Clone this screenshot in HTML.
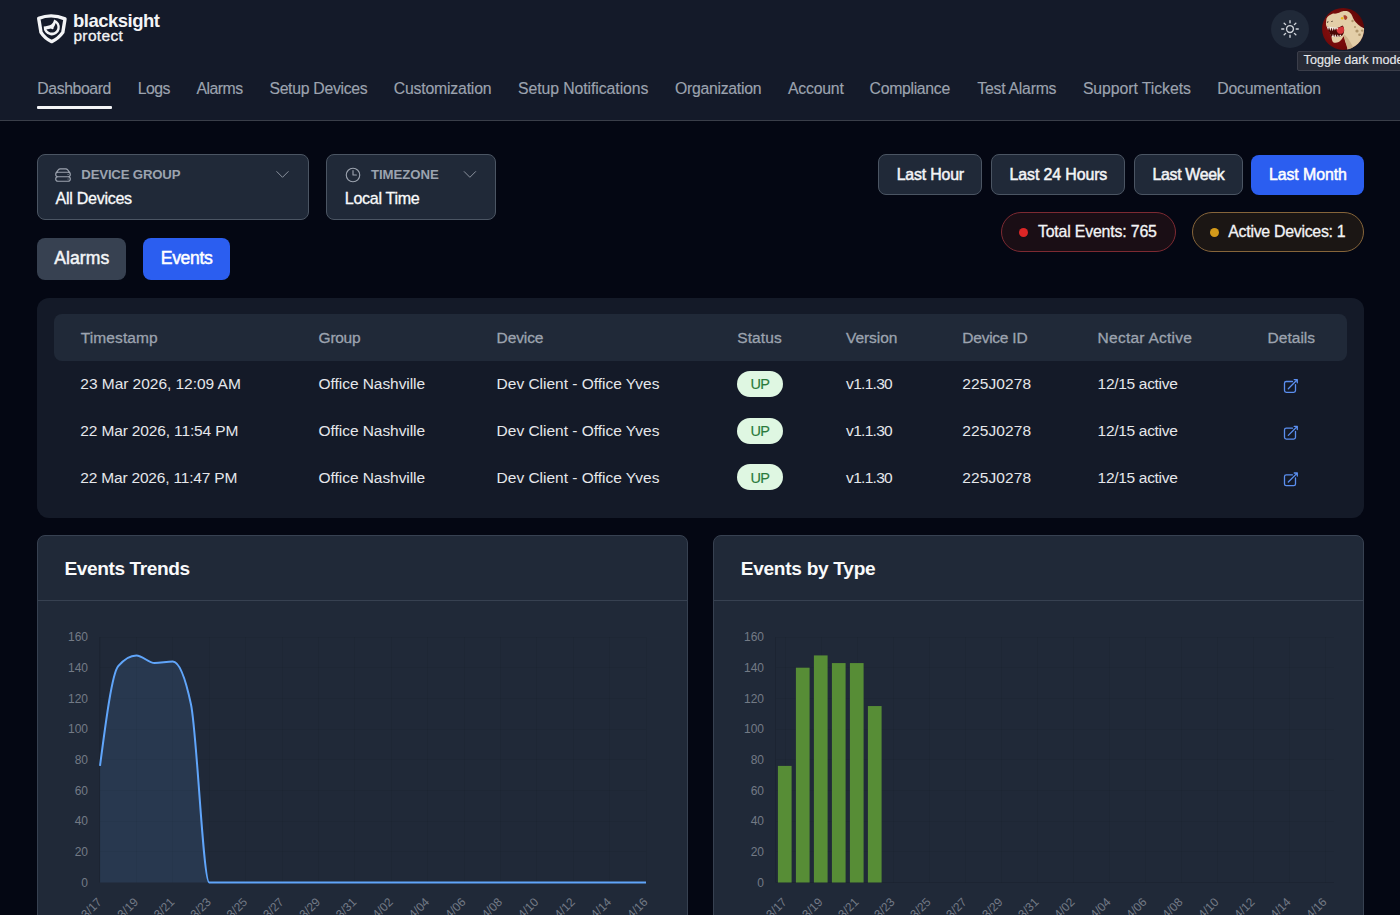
<!DOCTYPE html>
<html><head><meta charset="utf-8"><style>
*{margin:0;padding:0;box-sizing:border-box}
html,body{width:1400px;height:915px;overflow:hidden;background:#040713;font-family:"Liberation Sans",sans-serif}
.a{position:absolute}
.t{position:absolute;white-space:nowrap}
.ax{position:absolute;width:60px;text-align:right;font-size:12px;line-height:12px;color:#737a86}
svg{position:absolute;left:0;top:0;overflow:visible}
</style></head><body>
<!-- header -->
<div class="a" style="left:0;top:0;width:1400px;height:120.5px;background:#141a29;border-bottom:1.5px solid #3a3e49"></div>
<svg width="80" height="50" viewBox="0 0 80 50" style="left:0;top:0">
  <path d="M38.7,18.4 Q51.5,13.2 65,18.9 L62.8,32.4 Q58.5,38.6 51.7,41.6 Q44.9,38.6 41,32.4 Z" fill="none" stroke="#f3f4f6" stroke-width="3.4" stroke-linejoin="round"/>
  <path fill-rule="evenodd" fill="#f3f4f6" d="M54.2,19.6 A8.1,8.1 0 1 1 43.7,26.6 C46.5,26.3 49.5,25.8 51.3,24.6 C52.7,23.5 53.6,21.8 54.2,19.6 Z M46.4,29.2 C47.6,31.3 49.7,32.6 52,32.6 C55,32.6 57.4,30.2 57.4,27.2 C57.4,25.7 56.8,24.2 55.7,23.1 C55.2,25 54.5,26.5 53.6,27.6 C54,28.5 53.3,29.3 52.4,29.2 C51.8,29.1 51.3,28.8 51.1,28.5 C49.7,29.1 48.2,29.2 46.4,29.2 Z"/>
</svg>
<div class="a" style="left:37px;top:106px;width:75px;height:3px;background:#f3f4f6;border-radius:1px"></div>
<div class="a" style="left:1271px;top:10px;width:38px;height:38px;border-radius:50%;background:#202938"></div>
<svg width="22" height="22" viewBox="0 0 24 24" style="left:1278.6px;top:17.9px" fill="none" stroke="#d1d5db" stroke-width="1.5" stroke-linecap="round" stroke-linejoin="round">
  <path d="M12 3v2.25m6.364.386-1.591 1.591M21 12h-2.25m-.386 6.364-1.591-1.591M12 18.75V21m-4.773-4.227-1.591 1.591M5.25 12H3m4.227-4.773L5.636 5.636M15.75 12a3.75 3.75 0 1 1-7.5 0 3.75 3.75 0 0 1 7.5 0Z"/>
</svg>
<svg width="46" height="46" viewBox="0 0 46 46" style="left:1320px;top:6px">
  <defs><clipPath id="avc"><circle cx="23.1" cy="22.9" r="21"/></clipPath>
  <radialGradient id="avg" cx="0.38" cy="0.5" r="0.62"><stop offset="0" stop-color="#8a1010"/><stop offset="0.7" stop-color="#700909"/><stop offset="1" stop-color="#560505"/></radialGradient></defs>
  <g clip-path="url(#avc)">
    <rect width="46" height="46" fill="url(#avg)"/>
    <path fill="#e3cea8" d="M6.5,12.5 C8,10 9.5,8.8 11,8.5 C12,8 13,7.4 14,7.6 C15.5,7.8 16.5,7.2 18,7 C19.5,6.6 20.5,5.8 22,5.5 C23.5,5 24.5,4.9 25.5,5 C27,5.1 28,5.4 29,6 C30,6.8 31,7.5 31.5,8.5 C32.2,9.8 32.6,11 33,12 C34,14 35,15.5 36,16.5 C37.5,18 38.5,19 40,20 C41.5,21 42.8,21.8 46,23 L46,46 L28,46 C27.5,42 26.8,39.5 26,38 C25.3,36 24.8,34 24.5,33 C24.2,32 23.8,31 23.5,30 C22.8,31.8 22,33 21,34 C19.8,35.3 18.5,36.3 17,36.5 C15.5,36.8 14.3,36.8 13.5,36.5 C12.7,35.9 12.3,35 12,34 C11.8,33 11.6,32 11.5,31 L8,22 C7.5,21.5 6.8,21 6.5,20.5 C6,19.3 5.8,18 6,17 C6.1,15.5 6.2,14 6.5,12.5 Z"/>
    <path fill="#c9ae86" opacity="0.85" d="M23.5,30 C25,33 26.5,38 28,46 L35,46 C33,40 29.5,33.5 24.5,28.5 Z"/>
    <g fill="#b0966c"><circle cx="32.5" cy="15" r="1.2"/><circle cx="37" cy="25" r="1.6"/><circle cx="39.5" cy="28.8" r="1.3"/><circle cx="42.2" cy="24.6" r="1.2"/><circle cx="35" cy="21" r="1"/></g>
    <path fill="#4a0707" d="M6.8,20.6 C10,21.5 13,22 16,22 C18,21.8 20,21 22.5,19.5 C24,21 24.5,23.5 24,26 C23.5,28 22.5,29.5 21.5,30 C18,31 15,31.2 11.8,31 C10,28 8.2,24 6.8,20.6 Z"/>
    <path fill="#d5353a" d="M16.5,22.5 C19,21.5 21.5,20.5 23,20.5 C24.2,22 24.4,24.5 23.5,26.5 C22.5,27.8 20.5,28.2 18.5,27.5 C17,26.5 16.3,24.5 16.5,22.5 Z"/>
    <path fill="#f7f1e6" d="M6.8,20.6 L8.1,24.3 L9,21.1 L10.3,25 L11.6,21.5 L12.7,25.2 L13.8,21.8 L14.9,24.6 L16,22 L17.2,23.8 L18.2,21.7 Z"/>
    <path fill="#f7f1e6" d="M11.8,31.1 L13,27.8 L14,31 L15.3,28.2 L16.5,31 L17.8,28.5 L19,30.8 L20.2,28.6 L21.5,30.1 Z"/>
    <g fill="#3d2e22"><ellipse cx="7.7" cy="16" rx="0.9" ry="0.45" transform="rotate(-30 7.7 16)"/><ellipse cx="12" cy="15.4" rx="0.9" ry="0.45" transform="rotate(-40 12 15.4)"/></g>
    <path fill="#a8402e" d="M23.5,9.5 C25,9 26.5,9.6 27.3,11 C27.5,12.5 26.5,13.8 25,14 C24,13 23.5,11 23.5,9.5 Z"/>
    <circle cx="22.2" cy="12.2" r="1.25" fill="#e8b417"/>
  </g>
</svg>
<div class="a" style="left:1297px;top:51px;width:120px;height:20px;background:#272a35;border:1px solid #3b3e4a;border-radius:2px"></div>
<!-- filters -->
<div class="a" style="left:37px;top:154px;width:272px;height:66px;background:#202938;border:1px solid #4b5563;border-radius:8px"></div>
<div class="a" style="left:326px;top:154px;width:170px;height:66px;background:#202938;border:1px solid #4b5563;border-radius:8px"></div>
<svg width="18" height="18" viewBox="0 0 24 24" style="left:54.45px;top:165.5px" fill="none" stroke="#9ca3af" stroke-width="1.5" stroke-linecap="round" stroke-linejoin="round">
  <path d="M5.25 14.25h13.5m-13.5 0a3 3 0 0 1-3-3m3 3a3 3 0 1 0 0 6h13.5a3 3 0 1 0 0-6m-16.5-3a3 3 0 0 1 3-3h13.5a3 3 0 0 1 3 3m-19.5 0a4.5 4.5 0 0 1 .9-2.7L5.737 5.1a3.375 3.375 0 0 1 2.7-1.35h7.126c1.062 0 2.062.5 2.7 1.35l2.587 3.45a4.5 4.5 0 0 1 .9 2.7m0 0a3 3 0 0 1-3 3m0 3h.008v.008h-.008v-.008Zm0-6h.008v.008h-.008v-.008Z"/>
</svg>
<svg width="18" height="18" viewBox="0 0 24 24" style="left:344px;top:165.5px" fill="none" stroke="#9ca3af" stroke-width="1.5" stroke-linecap="round" stroke-linejoin="round">
  <path d="M12 6v6h4.5m4.5 0a9 9 0 1 1-18 0 9 9 0 0 1 18 0Z"/>
</svg>
<svg width="1400" height="300" style="left:0;top:0">
  <g fill="none" stroke="#8b929e" stroke-width="1" stroke-linecap="round" stroke-linejoin="round">
    <path d="M276.8,171.6 L282.5,177.3 L288.2,171.6"/>
    <path d="M464.2,171.6 L469.9,177.3 L475.6,171.6"/>
  </g>
</svg>
<!-- tabs -->
<div class="a" style="left:37px;top:237.5px;width:89px;height:42.5px;background:#374151;border-radius:8px"></div>
<div class="a" style="left:143px;top:237.5px;width:87px;height:42.5px;background:#2b5ef0;border-radius:8px"></div>
<!-- time range -->
<div class="a" style="left:878px;top:154.3px;width:104px;height:40.7px;background:#202938;border:1px solid #4b5563;border-radius:8px"></div>
<div class="a" style="left:991px;top:154.3px;width:134px;height:40.7px;background:#202938;border:1px solid #4b5563;border-radius:8px"></div>
<div class="a" style="left:1134px;top:154.3px;width:109px;height:40.7px;background:#202938;border:1px solid #4b5563;border-radius:8px"></div>
<div class="a" style="left:1251px;top:154.5px;width:113px;height:40px;background:#2b5ef0;border-radius:8px"></div>
<!-- badges -->
<div class="a" style="left:1001px;top:211.8px;width:175px;height:40.5px;background:#1a0e15;border:1.2px solid #7d2a32;border-radius:21px"></div>
<div class="a" style="left:1019.3px;top:227.7px;width:9px;height:9px;border-radius:50%;background:#dc2626"></div>
<div class="a" style="left:1192px;top:211.8px;width:172px;height:40.5px;background:#1b1614;border:1.2px solid #86653a;border-radius:21px"></div>
<div class="a" style="left:1210px;top:227.7px;width:9px;height:9px;border-radius:50%;background:#d49a1a"></div>
<!-- table -->
<div class="a" style="left:37px;top:297.5px;width:1327px;height:220px;background:#141a28;border-radius:12px"></div>
<div class="a" style="left:54px;top:314px;width:1293px;height:46.5px;background:#202938;border-radius:8px"></div>
<div class="a" style="left:737px;top:371px;width:45.5px;height:26px;background:#dff7e2;border-radius:13px"></div>
<div class="a" style="left:737px;top:417.6px;width:45.5px;height:26px;background:#dff7e2;border-radius:13px"></div>
<div class="a" style="left:737px;top:464.2px;width:45.5px;height:26px;background:#dff7e2;border-radius:13px"></div>
<svg width="1400" height="520" style="left:0;top:0">
  <g fill="none" stroke="#5b8ff0" stroke-width="1.3" stroke-linecap="round" stroke-linejoin="round">
    <path id="ext" d="M1292.5,381.5 H1286.3 A1.8,1.8 0 0 0 1284.5,383.3 V390.6 A1.8,1.8 0 0 0 1286.3,392.4 H1293.7 A1.8,1.8 0 0 0 1295.5,390.6 V384.6 M1288.3,388.7 L1297.2,379.8 M1294.2,379.7 H1297.3 V382.8"/>
    <use href="#ext" y="46.7"/>
    <use href="#ext" y="93.3"/>
  </g>
</svg>
<!-- charts -->
<div class="a" style="left:37px;top:535px;width:651px;height:420px;background:#202938;border:1px solid #374151;border-radius:8px"></div>
<div class="a" style="left:713px;top:535px;width:651px;height:420px;background:#202938;border:1px solid #374151;border-radius:8px"></div>
<div class="a" style="left:38px;top:600px;width:649px;height:1px;background:#374151"></div>
<div class="a" style="left:714px;top:600px;width:649px;height:1px;background:#374151"></div>
<svg width="1400" height="915" style="left:0;top:0">
  <g stroke="#000" stroke-opacity="0.045" stroke-width="1" fill="none">
  <line x1="100" y1="851.50" x2="646" y2="851.50"/>
<line x1="100" y1="821.50" x2="646" y2="821.50"/>
<line x1="100" y1="790.50" x2="646" y2="790.50"/>
<line x1="100" y1="759.50" x2="646" y2="759.50"/>
<line x1="100" y1="729.50" x2="646" y2="729.50"/>
<line x1="100" y1="698.50" x2="646" y2="698.50"/>
<line x1="100" y1="667.50" x2="646" y2="667.50"/>
<line x1="100" y1="637.50" x2="646" y2="637.50"/>
<line x1="100.50" y1="637" x2="100.50" y2="882.5"/>
<line x1="136.50" y1="637" x2="136.50" y2="882.5"/>
<line x1="172.50" y1="637" x2="172.50" y2="882.5"/>
<line x1="209.50" y1="637" x2="209.50" y2="882.5"/>
<line x1="245.50" y1="637" x2="245.50" y2="882.5"/>
<line x1="282.50" y1="637" x2="282.50" y2="882.5"/>
<line x1="318.50" y1="637" x2="318.50" y2="882.5"/>
<line x1="354.50" y1="637" x2="354.50" y2="882.5"/>
<line x1="391.50" y1="637" x2="391.50" y2="882.5"/>
<line x1="427.50" y1="637" x2="427.50" y2="882.5"/>
<line x1="464.50" y1="637" x2="464.50" y2="882.5"/>
<line x1="500.50" y1="637" x2="500.50" y2="882.5"/>
<line x1="536.50" y1="637" x2="536.50" y2="882.5"/>
<line x1="573.50" y1="637" x2="573.50" y2="882.5"/>
<line x1="609.50" y1="637" x2="609.50" y2="882.5"/>
<line x1="646.50" y1="637" x2="646.50" y2="882.5"/>
  <line x1="776" y1="851.50" x2="1334" y2="851.50"/>
<line x1="776" y1="821.50" x2="1334" y2="821.50"/>
<line x1="776" y1="790.50" x2="1334" y2="790.50"/>
<line x1="776" y1="759.50" x2="1334" y2="759.50"/>
<line x1="776" y1="729.50" x2="1334" y2="729.50"/>
<line x1="776" y1="698.50" x2="1334" y2="698.50"/>
<line x1="776" y1="667.50" x2="1334" y2="667.50"/>
<line x1="776" y1="637.50" x2="1334" y2="637.50"/>
<line x1="785.50" y1="637" x2="785.50" y2="882.5"/>
<line x1="821.50" y1="637" x2="821.50" y2="882.5"/>
<line x1="857.50" y1="637" x2="857.50" y2="882.5"/>
<line x1="893.50" y1="637" x2="893.50" y2="882.5"/>
<line x1="929.50" y1="637" x2="929.50" y2="882.5"/>
<line x1="965.50" y1="637" x2="965.50" y2="882.5"/>
<line x1="1001.50" y1="637" x2="1001.50" y2="882.5"/>
<line x1="1037.50" y1="637" x2="1037.50" y2="882.5"/>
<line x1="1073.50" y1="637" x2="1073.50" y2="882.5"/>
<line x1="1109.50" y1="637" x2="1109.50" y2="882.5"/>
<line x1="1145.50" y1="637" x2="1145.50" y2="882.5"/>
<line x1="1181.50" y1="637" x2="1181.50" y2="882.5"/>
<line x1="1217.50" y1="637" x2="1217.50" y2="882.5"/>
<line x1="1253.50" y1="637" x2="1253.50" y2="882.5"/>
<line x1="1289.50" y1="637" x2="1289.50" y2="882.5"/>
<line x1="1325.50" y1="637" x2="1325.50" y2="882.5"/>
  </g>
  <g stroke="#000" stroke-opacity="0.1" stroke-width="1"><line x1="776" y1="882.5" x2="1334" y2="882.5"/><line x1="99.5" y1="637" x2="99.5" y2="882.5"/><line x1="775.5" y1="637" x2="775.5" y2="882.5"/></g>
  <path d="M100.00,765.89C106.07,719.60 112.13,673.31 118.20,666.15C124.27,658.99 130.33,655.41 136.40,655.41C142.47,655.41 148.53,663.08 154.60,663.08C160.67,663.08 166.73,661.55 172.80,661.55C178.87,661.55 184.93,675.87 191.00,704.51C197.07,733.15 203.13,882.50 209.20,882.50C215.27,882.50 221.33,882.50 227.40,882.50C233.47,882.50 239.53,882.50 245.60,882.50C251.67,882.50 257.73,882.50 263.80,882.50C269.87,882.50 275.93,882.50 282.00,882.50C288.07,882.50 294.13,882.50 300.20,882.50C306.27,882.50 312.33,882.50 318.40,882.50C324.47,882.50 330.53,882.50 336.60,882.50C342.67,882.50 348.73,882.50 354.80,882.50C360.87,882.50 366.93,882.50 373.00,882.50C379.07,882.50 385.13,882.50 391.20,882.50C397.27,882.50 403.33,882.50 409.40,882.50C415.47,882.50 421.53,882.50 427.60,882.50C433.67,882.50 439.73,882.50 445.80,882.50C451.87,882.50 457.93,882.50 464.00,882.50C470.07,882.50 476.13,882.50 482.20,882.50C488.27,882.50 494.33,882.50 500.40,882.50C506.47,882.50 512.53,882.50 518.60,882.50C524.67,882.50 530.73,882.50 536.80,882.50C542.87,882.50 548.93,882.50 555.00,882.50C561.07,882.50 567.13,882.50 573.20,882.50C579.27,882.50 585.33,882.50 591.40,882.50C597.47,882.50 603.53,882.50 609.60,882.50C615.67,882.50 621.73,882.50 627.80,882.50C633.87,882.50 639.93,882.50 646.00,882.50 L646,882.5 L100,882.5 Z" fill="#60a5fa" fill-opacity="0.12" stroke="none"/>
  <path d="M100.00,765.89C106.07,719.60 112.13,673.31 118.20,666.15C124.27,658.99 130.33,655.41 136.40,655.41C142.47,655.41 148.53,663.08 154.60,663.08C160.67,663.08 166.73,661.55 172.80,661.55C178.87,661.55 184.93,675.87 191.00,704.51C197.07,733.15 203.13,882.50 209.20,882.50C215.27,882.50 221.33,882.50 227.40,882.50C233.47,882.50 239.53,882.50 245.60,882.50C251.67,882.50 257.73,882.50 263.80,882.50C269.87,882.50 275.93,882.50 282.00,882.50C288.07,882.50 294.13,882.50 300.20,882.50C306.27,882.50 312.33,882.50 318.40,882.50C324.47,882.50 330.53,882.50 336.60,882.50C342.67,882.50 348.73,882.50 354.80,882.50C360.87,882.50 366.93,882.50 373.00,882.50C379.07,882.50 385.13,882.50 391.20,882.50C397.27,882.50 403.33,882.50 409.40,882.50C415.47,882.50 421.53,882.50 427.60,882.50C433.67,882.50 439.73,882.50 445.80,882.50C451.87,882.50 457.93,882.50 464.00,882.50C470.07,882.50 476.13,882.50 482.20,882.50C488.27,882.50 494.33,882.50 500.40,882.50C506.47,882.50 512.53,882.50 518.60,882.50C524.67,882.50 530.73,882.50 536.80,882.50C542.87,882.50 548.93,882.50 555.00,882.50C561.07,882.50 567.13,882.50 573.20,882.50C579.27,882.50 585.33,882.50 591.40,882.50C597.47,882.50 603.53,882.50 609.60,882.50C615.67,882.50 621.73,882.50 627.80,882.50C633.87,882.50 639.93,882.50 646.00,882.50" fill="none" stroke="#60a5fa" stroke-width="2"/>
  <g fill="#578d36"><rect x="777.90" y="765.89" width="13.7" height="116.61"/>
<rect x="795.90" y="667.69" width="13.7" height="214.81"/>
<rect x="813.90" y="655.41" width="13.7" height="227.09"/>
<rect x="831.90" y="663.08" width="13.7" height="219.42"/>
<rect x="849.90" y="663.08" width="13.7" height="219.42"/>
<rect x="867.90" y="706.05" width="13.7" height="176.45"/></g>
  <g fill="#737a86" font-family="Liberation Sans" font-size="12">
  <text x="102.50" y="902.8" transform="rotate(-45 102.50 902.8)" text-anchor="end">03/17</text>
<text x="138.90" y="902.8" transform="rotate(-45 138.90 902.8)" text-anchor="end">03/19</text>
<text x="175.30" y="902.8" transform="rotate(-45 175.30 902.8)" text-anchor="end">03/21</text>
<text x="211.70" y="902.8" transform="rotate(-45 211.70 902.8)" text-anchor="end">03/23</text>
<text x="248.10" y="902.8" transform="rotate(-45 248.10 902.8)" text-anchor="end">03/25</text>
<text x="284.50" y="902.8" transform="rotate(-45 284.50 902.8)" text-anchor="end">03/27</text>
<text x="320.90" y="902.8" transform="rotate(-45 320.90 902.8)" text-anchor="end">03/29</text>
<text x="357.30" y="902.8" transform="rotate(-45 357.30 902.8)" text-anchor="end">03/31</text>
<text x="393.70" y="902.8" transform="rotate(-45 393.70 902.8)" text-anchor="end">04/02</text>
<text x="430.10" y="902.8" transform="rotate(-45 430.10 902.8)" text-anchor="end">04/04</text>
<text x="466.50" y="902.8" transform="rotate(-45 466.50 902.8)" text-anchor="end">04/06</text>
<text x="502.90" y="902.8" transform="rotate(-45 502.90 902.8)" text-anchor="end">04/08</text>
<text x="539.30" y="902.8" transform="rotate(-45 539.30 902.8)" text-anchor="end">04/10</text>
<text x="575.70" y="902.8" transform="rotate(-45 575.70 902.8)" text-anchor="end">04/12</text>
<text x="612.10" y="902.8" transform="rotate(-45 612.10 902.8)" text-anchor="end">04/14</text>
<text x="648.50" y="902.8" transform="rotate(-45 648.50 902.8)" text-anchor="end">04/16</text>
  <text x="787.50" y="902.8" transform="rotate(-45 787.50 902.8)" text-anchor="end">03/17</text>
<text x="823.50" y="902.8" transform="rotate(-45 823.50 902.8)" text-anchor="end">03/19</text>
<text x="859.50" y="902.8" transform="rotate(-45 859.50 902.8)" text-anchor="end">03/21</text>
<text x="895.50" y="902.8" transform="rotate(-45 895.50 902.8)" text-anchor="end">03/23</text>
<text x="931.50" y="902.8" transform="rotate(-45 931.50 902.8)" text-anchor="end">03/25</text>
<text x="967.50" y="902.8" transform="rotate(-45 967.50 902.8)" text-anchor="end">03/27</text>
<text x="1003.50" y="902.8" transform="rotate(-45 1003.50 902.8)" text-anchor="end">03/29</text>
<text x="1039.50" y="902.8" transform="rotate(-45 1039.50 902.8)" text-anchor="end">03/31</text>
<text x="1075.50" y="902.8" transform="rotate(-45 1075.50 902.8)" text-anchor="end">04/02</text>
<text x="1111.50" y="902.8" transform="rotate(-45 1111.50 902.8)" text-anchor="end">04/04</text>
<text x="1147.50" y="902.8" transform="rotate(-45 1147.50 902.8)" text-anchor="end">04/06</text>
<text x="1183.50" y="902.8" transform="rotate(-45 1183.50 902.8)" text-anchor="end">04/08</text>
<text x="1219.50" y="902.8" transform="rotate(-45 1219.50 902.8)" text-anchor="end">04/10</text>
<text x="1255.50" y="902.8" transform="rotate(-45 1255.50 902.8)" text-anchor="end">04/12</text>
<text x="1291.50" y="902.8" transform="rotate(-45 1291.50 902.8)" text-anchor="end">04/14</text>
<text x="1327.50" y="902.8" transform="rotate(-45 1327.50 902.8)" text-anchor="end">04/16</text>
  </g>
</svg>
<div class="ax" style="left:28.0px;top:876.64px;">0</div>
<div class="ax" style="left:28.0px;top:845.95px;">20</div>
<div class="ax" style="left:28.0px;top:815.27px;">40</div>
<div class="ax" style="left:28.0px;top:784.58px;">60</div>
<div class="ax" style="left:28.0px;top:753.89px;">80</div>
<div class="ax" style="left:28.0px;top:723.20px;">100</div>
<div class="ax" style="left:28.0px;top:692.52px;">120</div>
<div class="ax" style="left:28.0px;top:661.83px;">140</div>
<div class="ax" style="left:28.0px;top:631.14px;">160</div>
<div class="ax" style="left:704.0px;top:876.64px;">0</div>
<div class="ax" style="left:704.0px;top:845.95px;">20</div>
<div class="ax" style="left:704.0px;top:815.27px;">40</div>
<div class="ax" style="left:704.0px;top:784.58px;">60</div>
<div class="ax" style="left:704.0px;top:753.89px;">80</div>
<div class="ax" style="left:704.0px;top:723.20px;">100</div>
<div class="ax" style="left:704.0px;top:692.52px;">120</div>
<div class="ax" style="left:704.0px;top:661.83px;">140</div>
<div class="ax" style="left:704.0px;top:631.14px;">160</div>
<div class="t" id="t0" style="left:73.00px;top:12.04px;font-size:18.5px;line-height:18.5px;font-weight:700;color:#f3f4f6;letter-spacing:-0.500px;">blacksight</div>
<div class="t" id="t1" style="left:73.40px;top:28.08px;font-size:15.5px;line-height:15.5px;font-weight:400;color:#f3f4f6;letter-spacing:0.352px;-webkit-text-stroke:0.3px #f3f4f6;">protect</div>
<div class="t" id="t2" style="left:37.30px;top:80.53px;font-size:15.8px;line-height:15.8px;font-weight:400;color:#9ca3af;letter-spacing:-0.398px;-webkit-text-stroke:0.15px #9ca3af;">Dashboard</div>
<div class="t" id="t3" style="left:137.70px;top:80.53px;font-size:15.8px;line-height:15.8px;font-weight:400;color:#9ca3af;letter-spacing:-0.519px;-webkit-text-stroke:0.15px #9ca3af;">Logs</div>
<div class="t" id="t4" style="left:196.50px;top:80.53px;font-size:15.8px;line-height:15.8px;font-weight:400;color:#9ca3af;letter-spacing:-0.511px;-webkit-text-stroke:0.15px #9ca3af;">Alarms</div>
<div class="t" id="t5" style="left:269.40px;top:80.53px;font-size:15.8px;line-height:15.8px;font-weight:400;color:#9ca3af;letter-spacing:-0.297px;-webkit-text-stroke:0.15px #9ca3af;">Setup Devices</div>
<div class="t" id="t6" style="left:393.70px;top:80.53px;font-size:15.8px;line-height:15.8px;font-weight:400;color:#9ca3af;letter-spacing:-0.183px;-webkit-text-stroke:0.15px #9ca3af;">Customization</div>
<div class="t" id="t7" style="left:518.00px;top:80.53px;font-size:15.8px;line-height:15.8px;font-weight:400;color:#9ca3af;letter-spacing:-0.073px;-webkit-text-stroke:0.15px #9ca3af;">Setup Notifications</div>
<div class="t" id="t8" style="left:674.90px;top:80.53px;font-size:15.8px;line-height:15.8px;font-weight:400;color:#9ca3af;letter-spacing:-0.270px;-webkit-text-stroke:0.15px #9ca3af;">Organization</div>
<div class="t" id="t9" style="left:788.00px;top:80.53px;font-size:15.8px;line-height:15.8px;font-weight:400;color:#9ca3af;letter-spacing:-0.215px;-webkit-text-stroke:0.15px #9ca3af;">Account</div>
<div class="t" id="t10" style="left:869.60px;top:80.53px;font-size:15.8px;line-height:15.8px;font-weight:400;color:#9ca3af;letter-spacing:-0.314px;-webkit-text-stroke:0.15px #9ca3af;">Compliance</div>
<div class="t" id="t11" style="left:977.30px;top:80.53px;font-size:15.8px;line-height:15.8px;font-weight:400;color:#9ca3af;letter-spacing:-0.245px;-webkit-text-stroke:0.15px #9ca3af;">Test Alarms</div>
<div class="t" id="t12" style="left:1082.90px;top:80.53px;font-size:15.8px;line-height:15.8px;font-weight:400;color:#9ca3af;letter-spacing:-0.063px;-webkit-text-stroke:0.15px #9ca3af;">Support Tickets</div>
<div class="t" id="t13" style="left:1217.30px;top:80.53px;font-size:15.8px;line-height:15.8px;font-weight:400;color:#9ca3af;letter-spacing:-0.205px;-webkit-text-stroke:0.15px #9ca3af;">Documentation</div>
<div class="t" id="t14" style="left:1303.60px;top:54.23px;font-size:12.6px;line-height:12.6px;font-weight:400;color:#e5e7eb;letter-spacing:-0.007px;-webkit-text-stroke:0.15px #e5e7eb;">Toggle dark mode</div>
<div class="t" id="t15" style="left:81.30px;top:168.33px;font-size:13.2px;line-height:13.2px;font-weight:700;color:#9ca3af;letter-spacing:-0.176px;">DEVICE GROUP</div>
<div class="t" id="t16" style="left:55.50px;top:189.97px;font-size:16.1px;line-height:16.1px;font-weight:400;color:#f9fafb;letter-spacing:-0.300px;-webkit-text-stroke:0.3px #f9fafb;">All Devices</div>
<div class="t" id="t17" style="left:370.90px;top:168.33px;font-size:13.2px;line-height:13.2px;font-weight:700;color:#9ca3af;letter-spacing:-0.034px;">TIMEZONE</div>
<div class="t" id="t18" style="left:344.80px;top:189.97px;font-size:16.1px;line-height:16.1px;font-weight:400;color:#f9fafb;letter-spacing:-0.314px;-webkit-text-stroke:0.3px #f9fafb;">Local Time</div>
<div class="t" id="t19" style="left:54.20px;top:250.10px;font-size:17.6px;line-height:17.6px;font-weight:400;color:#f3f4f6;letter-spacing:0.052px;-webkit-text-stroke:0.5px #f3f4f6;">Alarms</div>
<div class="t" id="t20" style="left:160.80px;top:250.10px;font-size:17.6px;line-height:17.6px;font-weight:400;color:#ffffff;letter-spacing:-0.378px;-webkit-text-stroke:0.5px #ffffff;">Events</div>
<div class="t" id="t21" style="left:896.70px;top:166.64px;font-size:15.9px;line-height:15.9px;font-weight:400;color:#f3f4f6;letter-spacing:-0.188px;-webkit-text-stroke:0.5px #f3f4f6;">Last Hour</div>
<div class="t" id="t22" style="left:1009.60px;top:166.64px;font-size:15.9px;line-height:15.9px;font-weight:400;color:#f3f4f6;letter-spacing:-0.103px;-webkit-text-stroke:0.5px #f3f4f6;">Last 24 Hours</div>
<div class="t" id="t23" style="left:1152.50px;top:166.64px;font-size:15.9px;line-height:15.9px;font-weight:400;color:#f3f4f6;letter-spacing:-0.323px;-webkit-text-stroke:0.5px #f3f4f6;">Last Week</div>
<div class="t" id="t24" style="left:1268.90px;top:166.64px;font-size:15.9px;line-height:15.9px;font-weight:400;color:#ffffff;letter-spacing:-0.069px;-webkit-text-stroke:0.5px #ffffff;">Last Month</div>
<div class="t" id="t25" style="left:1037.90px;top:224.44px;font-size:15.9px;line-height:15.9px;font-weight:400;color:#f3f4f6;letter-spacing:-0.182px;-webkit-text-stroke:0.3px #f3f4f6;">Total Events: 765</div>
<div class="t" id="t26" style="left:1228.30px;top:224.44px;font-size:15.9px;line-height:15.9px;font-weight:400;color:#f3f4f6;letter-spacing:-0.280px;-webkit-text-stroke:0.3px #f3f4f6;">Active Devices: 1</div>
<div class="t" id="t27" style="left:80.70px;top:329.58px;font-size:15.5px;line-height:15.5px;font-weight:400;color:#9ca3af;letter-spacing:0.114px;-webkit-text-stroke:0.3px #9ca3af;">Timestamp</div>
<div class="t" id="t28" style="left:318.60px;top:329.58px;font-size:15.5px;line-height:15.5px;font-weight:400;color:#9ca3af;letter-spacing:-0.272px;-webkit-text-stroke:0.3px #9ca3af;">Group</div>
<div class="t" id="t29" style="left:496.60px;top:329.58px;font-size:15.5px;line-height:15.5px;font-weight:400;color:#9ca3af;letter-spacing:-0.118px;-webkit-text-stroke:0.3px #9ca3af;">Device</div>
<div class="t" id="t30" style="left:737.20px;top:329.58px;font-size:15.5px;line-height:15.5px;font-weight:400;color:#9ca3af;letter-spacing:0.130px;-webkit-text-stroke:0.3px #9ca3af;">Status</div>
<div class="t" id="t31" style="left:846.10px;top:329.58px;font-size:15.5px;line-height:15.5px;font-weight:400;color:#9ca3af;letter-spacing:-0.085px;-webkit-text-stroke:0.3px #9ca3af;">Version</div>
<div class="t" id="t32" style="left:962.30px;top:329.58px;font-size:15.5px;line-height:15.5px;font-weight:400;color:#9ca3af;letter-spacing:-0.237px;-webkit-text-stroke:0.3px #9ca3af;">Device ID</div>
<div class="t" id="t33" style="left:1097.60px;top:329.58px;font-size:15.5px;line-height:15.5px;font-weight:400;color:#9ca3af;letter-spacing:0.248px;-webkit-text-stroke:0.3px #9ca3af;">Nectar Active</div>
<div class="t" id="t34" style="left:1267.50px;top:329.58px;font-size:15.5px;line-height:15.5px;font-weight:400;color:#9ca3af;letter-spacing:0.037px;-webkit-text-stroke:0.3px #9ca3af;">Details</div>
<div class="t" id="t35" style="left:80.30px;top:376.28px;font-size:15.5px;line-height:15.5px;font-weight:400;color:#e5e7eb;letter-spacing:-0.032px;">23 Mar 2026, 12:09 AM</div>
<div class="t" id="t36" style="left:318.60px;top:376.28px;font-size:15.5px;line-height:15.5px;font-weight:400;color:#e5e7eb;letter-spacing:-0.060px;">Office Nashville</div>
<div class="t" id="t37" style="left:496.60px;top:376.28px;font-size:15.5px;line-height:15.5px;font-weight:400;color:#e5e7eb;letter-spacing:-0.013px;">Dev Client - Office Yves</div>
<div class="t" id="t38" style="left:750.40px;top:377.33px;font-size:14.5px;line-height:14.5px;font-weight:400;color:#2b7a3b;letter-spacing:-0.556px;-webkit-text-stroke:0.15px #2b7a3b;">UP</div>
<div class="t" id="t39" style="left:846.10px;top:376.28px;font-size:15.5px;line-height:15.5px;font-weight:400;color:#e5e7eb;letter-spacing:-0.700px;">v1.1.30</div>
<div class="t" id="t40" style="left:962.30px;top:376.28px;font-size:15.5px;line-height:15.5px;font-weight:400;color:#e5e7eb;letter-spacing:0.099px;">225J0278</div>
<div class="t" id="t41" style="left:1097.60px;top:376.28px;font-size:15.5px;line-height:15.5px;font-weight:400;color:#e5e7eb;letter-spacing:-0.309px;">12/15 active</div>
<div class="t" id="t42" style="left:80.30px;top:422.98px;font-size:15.5px;line-height:15.5px;font-weight:400;color:#e5e7eb;letter-spacing:-0.142px;">22 Mar 2026, 11:54 PM</div>
<div class="t" id="t43" style="left:318.60px;top:422.98px;font-size:15.5px;line-height:15.5px;font-weight:400;color:#e5e7eb;letter-spacing:-0.060px;">Office Nashville</div>
<div class="t" id="t44" style="left:496.60px;top:422.98px;font-size:15.5px;line-height:15.5px;font-weight:400;color:#e5e7eb;letter-spacing:-0.013px;">Dev Client - Office Yves</div>
<div class="t" id="t45" style="left:750.40px;top:424.03px;font-size:14.5px;line-height:14.5px;font-weight:400;color:#2b7a3b;letter-spacing:-0.556px;-webkit-text-stroke:0.15px #2b7a3b;">UP</div>
<div class="t" id="t46" style="left:846.10px;top:422.98px;font-size:15.5px;line-height:15.5px;font-weight:400;color:#e5e7eb;letter-spacing:-0.700px;">v1.1.30</div>
<div class="t" id="t47" style="left:962.30px;top:422.98px;font-size:15.5px;line-height:15.5px;font-weight:400;color:#e5e7eb;letter-spacing:0.099px;">225J0278</div>
<div class="t" id="t48" style="left:1097.60px;top:422.98px;font-size:15.5px;line-height:15.5px;font-weight:400;color:#e5e7eb;letter-spacing:-0.309px;">12/15 active</div>
<div class="t" id="t49" style="left:80.30px;top:469.58px;font-size:15.5px;line-height:15.5px;font-weight:400;color:#e5e7eb;letter-spacing:-0.192px;">22 Mar 2026, 11:47 PM</div>
<div class="t" id="t50" style="left:318.60px;top:469.58px;font-size:15.5px;line-height:15.5px;font-weight:400;color:#e5e7eb;letter-spacing:-0.060px;">Office Nashville</div>
<div class="t" id="t51" style="left:496.60px;top:469.58px;font-size:15.5px;line-height:15.5px;font-weight:400;color:#e5e7eb;letter-spacing:-0.013px;">Dev Client - Office Yves</div>
<div class="t" id="t52" style="left:750.40px;top:470.63px;font-size:14.5px;line-height:14.5px;font-weight:400;color:#2b7a3b;letter-spacing:-0.556px;-webkit-text-stroke:0.15px #2b7a3b;">UP</div>
<div class="t" id="t53" style="left:846.10px;top:469.58px;font-size:15.5px;line-height:15.5px;font-weight:400;color:#e5e7eb;letter-spacing:-0.700px;">v1.1.30</div>
<div class="t" id="t54" style="left:962.30px;top:469.58px;font-size:15.5px;line-height:15.5px;font-weight:400;color:#e5e7eb;letter-spacing:0.099px;">225J0278</div>
<div class="t" id="t55" style="left:1097.60px;top:469.58px;font-size:15.5px;line-height:15.5px;font-weight:400;color:#e5e7eb;letter-spacing:-0.309px;">12/15 active</div>
<div class="t" id="t56" style="left:64.40px;top:558.83px;font-size:19.1px;line-height:19.1px;font-weight:700;color:#f9fafb;letter-spacing:-0.394px;">Events Trends</div>
<div class="t" id="t57" style="left:740.70px;top:558.83px;font-size:19.1px;line-height:19.1px;font-weight:700;color:#f9fafb;letter-spacing:-0.282px;">Events by Type</div>
</body></html>
